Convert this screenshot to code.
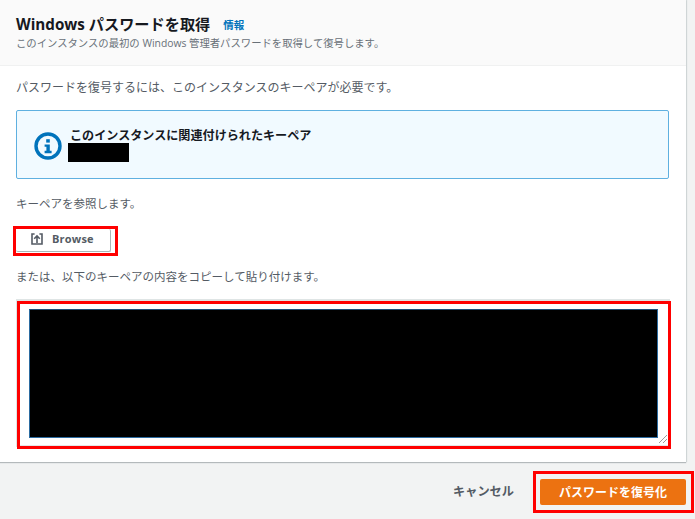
<div class="page">
    <div class="card">
        <header class="card-header">
            <h1>Windows パスワードを取得<a href="#info" class="info">情報</a></h1>
            <p class="sub">このインスタンスの最初の Windows 管理者パスワードを取得して復号します。</p>
        </header>

        <div class="card-body">
            <p class="lead">パスワードを復号するには、このインスタンスのキーペアが必要です。</p>

            <div class="alert">
                <svg class="alert-icon" viewBox="0 0 28 28" width="28" height="28" aria-hidden="true">
                    <circle cx="14" cy="14" r="12" fill="none" stroke="#0073bb" stroke-width="3.4" />
                    <rect x="12.2" y="7.2" width="3.6" height="3.4" fill="#0073bb" />
                    <path d="M10.6 12.4h5.2v6.4h1.8v2.4h-7v-2.4h1.8v-4h-1.8z" fill="#0073bb" />
                </svg>
                <div class="alert-text">
                    <strong>このインスタンスに関連付けられたキーペア</strong>
                    <div class="masked-name"></div>
                </div>
            </div>

            <p class="browse-label">キーペアを参照します。</p>

            <div class="mark browse-mark">
                <button class="browse">
                    <svg viewBox="0 0 12 12" width="12" height="12" aria-hidden="true">
                        <path d="M3.6 1H1v10h10V1H8.4" fill="none" stroke="#545b64" stroke-width="1.6" />
                        <path d="M6 10V3.2M3.2 5.8 6 3l2.8 2.8" fill="none" stroke="#545b64" stroke-width="1.6" />
                    </svg>
                    Browse
                </button>
            </div>

            <p class="paste-label">または、以下のキーペアの内容をコピーして貼り付けます。</p>

            <div class="mark area-mark">
                <div class="masked-key"></div>
                <svg class="grip" viewBox="0 0 8 8" width="8" height="8" aria-hidden="true">
                    <path d="M0 8 8 0M4 8l4-4" stroke="#9a9a9a" stroke-width="1" />
                </svg>
            </div>
        </div>
    </div>

    <footer class="actions">
        <span class="cancel">キャンセル</span>
        <div class="mark submit-mark">
            <button class="submit">パスワードを復号化</button>
        </div>
    </footer>
</div>

<style>
    :global(body) {
        margin: 0;
        background: #f2f3f3;
    }

    .page {
        width: 695px;
        height: 519px;
        display: flex;
        flex-direction: column;
        overflow: hidden;
        color: #545b64;
        font-family: "Open Sans", "Noto Sans CJK JP", sans-serif;
        font-size: 12px;
    }

    .card {
        width: 686px;
        height: 462px;
        flex: none;
        background: #fff;
        box-shadow: 0 1px 1px 0 #b4b9bb, 1px 0 1px 0 #d5dbdb;
    }

    .card-header {
        height: 66px;
        box-sizing: border-box;
        padding: 14px 16px 0;
        background: #fafafa;
        border-bottom: 1px solid #f0f1f1;
    }

    h1 {
        margin: 0;
        color: #16191f;
        font-size: 15.2px;
        line-height: 20px;
        font-weight: 700;
    }

    .info {
        margin-left: 13px;
        color: #0073bb;
        font-size: 10.5px;
        font-weight: 700;
        text-decoration: none;
        vertical-align: 1px;
    }

    .sub {
        margin: 0;
        font-size: 10.35px;
        line-height: 16px;
        color: #687078;
    }

    .card-body {
        padding: 13px 16px 0;
    }

    p {
        margin: 0;
        line-height: 18px;
    }

    .lead {
        font-size: 12px;
    }

    .alert {
        display: flex;
        align-items: center;
        gap: 8px;
        width: 653px;
        height: 69px;
        box-sizing: border-box;
        margin-top: 13px;
        padding: 4px 18px 0 17px;
        background: #f1faff;
        border: 1px solid #5fb0e0;
        border-radius: 2px;
    }

    .alert-icon {
        flex: none;
        margin-top: -2px;
    }

    .alert-text {
        margin-top: -5px;
    }

    .alert-text strong {
        display: block;
        color: #16191f;
        font-size: 12.1px;
        line-height: 17px;
    }

    .masked-name {
        width: 61px;
        height: 19px;
        margin-top: -1px;
        margin-left: -2px;
        background: #000;
    }

    .browse-label {
        margin-top: 16px;
        font-size: 11.5px;
    }

    .mark {
        box-sizing: border-box;
        border: 3px solid #f00;
    }

    .browse-mark {
        width: 105px;
        height: 30px;
        margin-top: 13px;
        margin-left: -3px;
    }

    .browse {
        display: flex;
        align-items: center;
        gap: 9px;
        width: 95px;
        height: 23px;
        box-sizing: border-box;
        padding: 0 0 3px 15px;
        background: #fff;
        color: #545b64;
        border: none;
        border-right: 1px solid #aab7b8;
        border-bottom: 1px solid #aab7b8;
        border-radius: 2px;
        font-family: inherit;
        font-size: 11px;
        font-weight: 700;
        letter-spacing: 0.2px;
    }

    .paste-label {
        margin-top: 12px;
        font-size: 11.5px;
    }

    .area-mark {
        position: relative;
        width: 654px;
        height: 148px;
        margin-top: 15px;
        margin-left: 1px;
        padding: 5px 10px 0 9px;
        box-shadow: -1px -2px 0 0 #dfe5e5, inset 0 -1px 0 0 #e3e7e7;
    }

    .masked-key {
        height: 129px;
        box-sizing: border-box;
        background: #000;
        border: 1px solid #2b6ba0;
        border-top-color: #1f4f78;
    }

    .grip {
        position: absolute;
        right: 1px;
        bottom: 3px;
    }

    .actions {
        flex: 1;
        display: flex;
        align-items: center;
        justify-content: flex-end;
        gap: 19px;
        margin-top: 1px;
        padding-top: 2px;
    }

    .cancel {
        margin-top: -2px;
        font-size: 12.2px;
        font-weight: 700;
    }

    .submit-mark {
        width: 161px;
        height: 42px;
        margin-right: 1px;
        padding: 5px 5px 3px 4px;
    }

    .submit {
        display: block;
        width: 146px;
        height: 26px;
        box-sizing: border-box;
        border: none;
        border-radius: 2px;
        background: #ec7211;
        color: #fff;
        font-family: inherit;
        font-size: 12px;
        font-weight: 700;
    }
</style>
